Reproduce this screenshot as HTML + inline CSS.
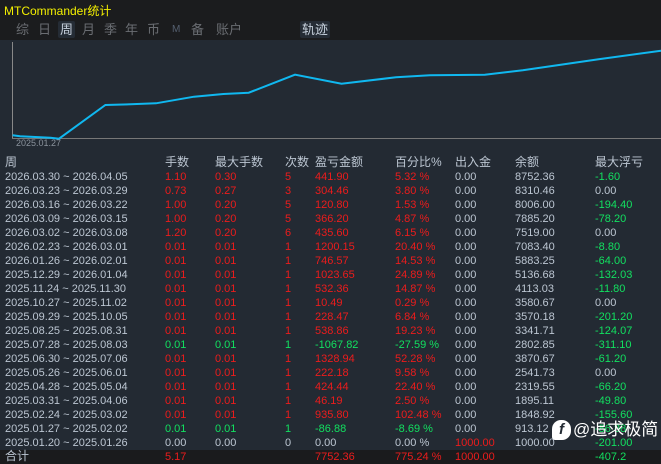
<!DOCTYPE html>
<html><head><meta charset="utf-8"><style>
*{margin:0;padding:0;box-sizing:border-box}
body{width:661px;height:464px;background:#232a33;font-family:"Liberation Sans","Noto Sans CJK SC",sans-serif;overflow:hidden;position:relative;color:#bcc6d2}
.top{position:absolute;left:0;top:0;width:661px;height:40px;background:#1b1c1e}
.title{position:absolute;left:4px;top:2px;font-size:12px;color:#f4f000}
.tab{position:absolute;top:21px;font-size:13px;color:#6a6d72;line-height:17px}
.hl{background:#252c35;color:#c8d2de;border-radius:2px;padding:0 2px}
.r{position:absolute;left:0;width:661px;height:14px;font-size:11px;line-height:14px;white-space:nowrap}
.r span{position:absolute}
.h{font-size:12px}
.red{color:#ec1c1c}.grn{color:#12e060}
.tot{position:absolute;left:0;top:450px;width:661px;height:14px;background:#1a1b1d}
</style></head><body>
<div class="top"></div>
<div class="title">MTCommander统计</div>
<div class="tab" style="left:16px">综</div>
<div class="tab" style="left:38px">日</div>
<div class="tab hl" style="left:58px">周</div>
<div class="tab" style="left:82px">月</div>
<div class="tab" style="left:104px">季</div>
<div class="tab" style="left:125px">年</div>
<div class="tab" style="left:147px">币</div>
<div class="tab" style="left:172px;font-size:10px;color:#556070">M</div>
<div class="tab" style="left:191px">备</div>
<div class="tab" style="left:216px">账户</div>
<div class="tab hl" style="left:300px">轨迹</div>
<svg style="position:absolute;left:0;top:40px" width="661" height="110">
<line x1="12.5" y1="2" x2="12.5" y2="99" stroke="#888" stroke-width="1"/>
<line x1="12" y1="98.5" x2="661" y2="98.5" stroke="#777" stroke-width="1"/>
<polyline fill="none" stroke="#10b8f0" stroke-width="2" points="12.6,95.3 20,96.3 50.6,97.7 59,98.7 105.4,65 130.7,64.3 156,63.3 194,56.7 223.4,54 248.7,52.7 295,34.7 341.5,43.7 396,37.3 430,35.3 484.8,34.7 522.8,30.3 560.7,24.7 598.6,19.3 661,10.7"/>
<text x="16" y="106" font-size="9" fill="#8a929c" font-family="Liberation Sans">2025.01.27</text>
</svg>
<div class="tot"></div>
<div class="r h" style="top:155px"><span style="left:5px">周</span><span style="left:165px">手数</span><span style="left:215px">最大手数</span><span style="left:285px">次数</span><span style="left:315px">盈亏金额</span><span style="left:395px">百分比%</span><span style="left:455px">出入金</span><span style="left:515px">余额</span><span style="left:595px">最大浮亏</span></div>
<div id="rows"></div>
<div class="r" style="top:170px"><span style="left:5px">2026.03.30 ~ 2026.04.05</span><span class="red" style="left:165px">1.10</span><span class="red" style="left:215px">0.30</span><span class="red" style="left:285px">5</span><span class="red" style="left:315px">441.90</span><span class="red" style="left:395px">5.32 %</span><span style="left:455px">0.00</span><span style="left:515px">8752.36</span><span class="grn" style="left:595px">-1.60</span></div>
<div class="r" style="top:184px"><span style="left:5px">2026.03.23 ~ 2026.03.29</span><span class="red" style="left:165px">0.73</span><span class="red" style="left:215px">0.27</span><span class="red" style="left:285px">3</span><span class="red" style="left:315px">304.46</span><span class="red" style="left:395px">3.80 %</span><span style="left:455px">0.00</span><span style="left:515px">8310.46</span><span style="left:595px">0.00</span></div>
<div class="r" style="top:198px"><span style="left:5px">2026.03.16 ~ 2026.03.22</span><span class="red" style="left:165px">1.00</span><span class="red" style="left:215px">0.20</span><span class="red" style="left:285px">5</span><span class="red" style="left:315px">120.80</span><span class="red" style="left:395px">1.53 %</span><span style="left:455px">0.00</span><span style="left:515px">8006.00</span><span class="grn" style="left:595px">-194.40</span></div>
<div class="r" style="top:212px"><span style="left:5px">2026.03.09 ~ 2026.03.15</span><span class="red" style="left:165px">1.00</span><span class="red" style="left:215px">0.20</span><span class="red" style="left:285px">5</span><span class="red" style="left:315px">366.20</span><span class="red" style="left:395px">4.87 %</span><span style="left:455px">0.00</span><span style="left:515px">7885.20</span><span class="grn" style="left:595px">-78.20</span></div>
<div class="r" style="top:226px"><span style="left:5px">2026.03.02 ~ 2026.03.08</span><span class="red" style="left:165px">1.20</span><span class="red" style="left:215px">0.20</span><span class="red" style="left:285px">6</span><span class="red" style="left:315px">435.60</span><span class="red" style="left:395px">6.15 %</span><span style="left:455px">0.00</span><span style="left:515px">7519.00</span><span style="left:595px">0.00</span></div>
<div class="r" style="top:240px"><span style="left:5px">2026.02.23 ~ 2026.03.01</span><span class="red" style="left:165px">0.01</span><span class="red" style="left:215px">0.01</span><span class="red" style="left:285px">1</span><span class="red" style="left:315px">1200.15</span><span class="red" style="left:395px">20.40 %</span><span style="left:455px">0.00</span><span style="left:515px">7083.40</span><span class="grn" style="left:595px">-8.80</span></div>
<div class="r" style="top:254px"><span style="left:5px">2026.01.26 ~ 2026.02.01</span><span class="red" style="left:165px">0.01</span><span class="red" style="left:215px">0.01</span><span class="red" style="left:285px">1</span><span class="red" style="left:315px">746.57</span><span class="red" style="left:395px">14.53 %</span><span style="left:455px">0.00</span><span style="left:515px">5883.25</span><span class="grn" style="left:595px">-64.00</span></div>
<div class="r" style="top:268px"><span style="left:5px">2025.12.29 ~ 2026.01.04</span><span class="red" style="left:165px">0.01</span><span class="red" style="left:215px">0.01</span><span class="red" style="left:285px">1</span><span class="red" style="left:315px">1023.65</span><span class="red" style="left:395px">24.89 %</span><span style="left:455px">0.00</span><span style="left:515px">5136.68</span><span class="grn" style="left:595px">-132.03</span></div>
<div class="r" style="top:282px"><span style="left:5px">2025.11.24 ~ 2025.11.30</span><span class="red" style="left:165px">0.01</span><span class="red" style="left:215px">0.01</span><span class="red" style="left:285px">1</span><span class="red" style="left:315px">532.36</span><span class="red" style="left:395px">14.87 %</span><span style="left:455px">0.00</span><span style="left:515px">4113.03</span><span class="grn" style="left:595px">-11.80</span></div>
<div class="r" style="top:296px"><span style="left:5px">2025.10.27 ~ 2025.11.02</span><span class="red" style="left:165px">0.01</span><span class="red" style="left:215px">0.01</span><span class="red" style="left:285px">1</span><span class="red" style="left:315px">10.49</span><span class="red" style="left:395px">0.29 %</span><span style="left:455px">0.00</span><span style="left:515px">3580.67</span><span style="left:595px">0.00</span></div>
<div class="r" style="top:310px"><span style="left:5px">2025.09.29 ~ 2025.10.05</span><span class="red" style="left:165px">0.01</span><span class="red" style="left:215px">0.01</span><span class="red" style="left:285px">1</span><span class="red" style="left:315px">228.47</span><span class="red" style="left:395px">6.84 %</span><span style="left:455px">0.00</span><span style="left:515px">3570.18</span><span class="grn" style="left:595px">-201.20</span></div>
<div class="r" style="top:324px"><span style="left:5px">2025.08.25 ~ 2025.08.31</span><span class="red" style="left:165px">0.01</span><span class="red" style="left:215px">0.01</span><span class="red" style="left:285px">1</span><span class="red" style="left:315px">538.86</span><span class="red" style="left:395px">19.23 %</span><span style="left:455px">0.00</span><span style="left:515px">3341.71</span><span class="grn" style="left:595px">-124.07</span></div>
<div class="r" style="top:338px"><span style="left:5px">2025.07.28 ~ 2025.08.03</span><span class="grn" style="left:165px">0.01</span><span class="grn" style="left:215px">0.01</span><span class="grn" style="left:285px">1</span><span class="grn" style="left:315px">-1067.82</span><span class="grn" style="left:395px">-27.59 %</span><span style="left:455px">0.00</span><span style="left:515px">2802.85</span><span class="grn" style="left:595px">-311.10</span></div>
<div class="r" style="top:352px"><span style="left:5px">2025.06.30 ~ 2025.07.06</span><span class="red" style="left:165px">0.01</span><span class="red" style="left:215px">0.01</span><span class="red" style="left:285px">1</span><span class="red" style="left:315px">1328.94</span><span class="red" style="left:395px">52.28 %</span><span style="left:455px">0.00</span><span style="left:515px">3870.67</span><span class="grn" style="left:595px">-61.20</span></div>
<div class="r" style="top:366px"><span style="left:5px">2025.05.26 ~ 2025.06.01</span><span class="red" style="left:165px">0.01</span><span class="red" style="left:215px">0.01</span><span class="red" style="left:285px">1</span><span class="red" style="left:315px">222.18</span><span class="red" style="left:395px">9.58 %</span><span style="left:455px">0.00</span><span style="left:515px">2541.73</span><span style="left:595px">0.00</span></div>
<div class="r" style="top:380px"><span style="left:5px">2025.04.28 ~ 2025.05.04</span><span class="red" style="left:165px">0.01</span><span class="red" style="left:215px">0.01</span><span class="red" style="left:285px">1</span><span class="red" style="left:315px">424.44</span><span class="red" style="left:395px">22.40 %</span><span style="left:455px">0.00</span><span style="left:515px">2319.55</span><span class="grn" style="left:595px">-66.20</span></div>
<div class="r" style="top:394px"><span style="left:5px">2025.03.31 ~ 2025.04.06</span><span class="red" style="left:165px">0.01</span><span class="red" style="left:215px">0.01</span><span class="red" style="left:285px">1</span><span class="red" style="left:315px">46.19</span><span class="red" style="left:395px">2.50 %</span><span style="left:455px">0.00</span><span style="left:515px">1895.11</span><span class="grn" style="left:595px">-49.80</span></div>
<div class="r" style="top:408px"><span style="left:5px">2025.02.24 ~ 2025.03.02</span><span class="red" style="left:165px">0.01</span><span class="red" style="left:215px">0.01</span><span class="red" style="left:285px">1</span><span class="red" style="left:315px">935.80</span><span class="red" style="left:395px">102.48 %</span><span style="left:455px">0.00</span><span style="left:515px">1848.92</span><span class="grn" style="left:595px">-155.60</span></div>
<div class="r" style="top:422px"><span style="left:5px">2025.01.27 ~ 2025.02.02</span><span class="grn" style="left:165px">0.01</span><span class="grn" style="left:215px">0.01</span><span class="grn" style="left:285px">1</span><span class="grn" style="left:315px">-86.88</span><span class="grn" style="left:395px">-8.69 %</span><span style="left:455px">0.00</span><span style="left:515px">913.12</span><span class="grn" style="left:595px">-86.88</span></div>
<div class="r" style="top:436px"><span style="left:5px">2025.01.20 ~ 2025.01.26</span><span style="left:165px">0.00</span><span style="left:215px">0.00</span><span style="left:285px">0</span><span style="left:315px">0.00</span><span style="left:395px">0.00 %</span><span class="red" style="left:455px">1000.00</span><span style="left:515px">1000.00</span><span class="grn" style="left:595px">-201.00</span></div>
<div class="r" style="top:450px"><span class="h" style="left:5px;top:-1px">合计</span><span class="red" style="left:165px">5.17</span><span class="red" style="left:315px">7752.36</span><span class="red" style="left:395px">775.24 %</span><span class="red" style="left:455px">1000.00</span><span class="grn" style="left:595px">-407.2</span></div>
<div style="position:absolute;left:552px;top:420px;width:19px;height:20px;background:#fff;border-radius:9px 9px 9px 3px;color:#232a33;font-weight:bold;font-size:15px;line-height:20px;text-align:center;font-style:italic">f</div>
<div style="position:absolute;left:573px;top:419px;font-size:17px;color:#fff;line-height:22px">@追求极简</div>
</body></html>
